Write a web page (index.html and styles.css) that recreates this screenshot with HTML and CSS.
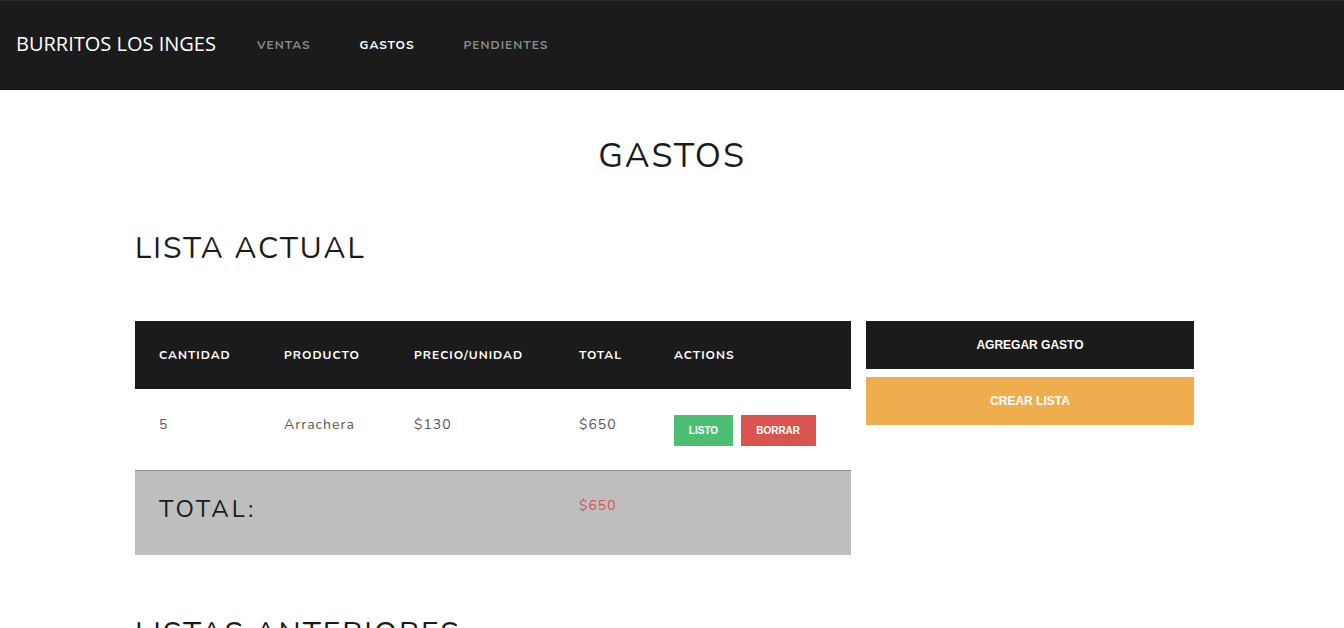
FILE: index.html
```html
<!DOCTYPE html>
<html lang="es">
<head>
<meta charset="utf-8">
<title>Gastos - Burritos Los Inges</title>
<link rel="stylesheet" href="styles.css">
</head>
<body>
<nav class="navbar">
  <a class="brand" href="#">BURRITOS LOS INGES</a>
  <ul class="nav-links">
    <li><a class="nav-link" href="#">VENTAS</a></li>
    <li><a class="nav-link active" href="#">GASTOS</a></li>
    <li><a class="nav-link" href="#">PENDIENTES</a></li>
  </ul>
</nav>
<main class="page">
  <h1 class="page-title">GASTOS</h1>
  <h2 class="section-title">LISTA ACTUAL</h2>
  <div class="current">
    <table class="expenses">
      <thead>
        <tr>
          <th class="c-qty">CANTIDAD</th>
          <th class="c-prod">PRODUCTO</th>
          <th class="c-price">PRECIO/UNIDAD</th>
          <th class="c-total">TOTAL</th>
          <th class="c-actions">ACTIONS</th>
        </tr>
      </thead>
      <tbody>
        <tr class="item-row">
          <td>5</td>
          <td>Arrachera</td>
          <td>$130</td>
          <td>$650</td>
          <td class="actions">
            <button class="btn btn-done">LISTO</button>
            <button class="btn btn-delete">BORRAR</button>
          </td>
        </tr>
      </tbody>
      <tfoot>
        <tr class="total-row">
          <td colspan="3" class="total-label">TOTAL:</td>
          <td class="total-value">$650</td>
          <td></td>
        </tr>
      </tfoot>
    </table>
    <div class="side">
      <button class="side-btn side-add">AGREGAR GASTO</button>
      <button class="side-btn side-create">CREAR LISTA</button>
    </div>
  </div>
  <h2 class="section-title previous">LISTAS ANTERIORES</h2>
</main>
</body>
</html>
```
FILE: styles.css
```css
* { box-sizing: border-box; }
html, body { margin: 0; padding: 0; }
body {
  font-family: "Nunito", "Lato", "Open Sans", sans-serif;
  color: #1b1b1b;
  background: #fff;
  overflow: hidden;
}
.navbar {
  height: 90px;
  background: #1b1b1b;
  border-top: 1px solid #2a2a2a;
  display: flex;
  align-items: center;
  padding: 0 16px 4px;
}
.brand {
  font-family: "Open Sans", sans-serif;
  font-size: 20px;
  font-weight: 500;
  color: #fff;
  text-decoration: none;
  margin-right: 41px;
  letter-spacing: 0;
}
.nav-links {
  list-style: none;
  display: flex;
  margin: 0;
  padding: 0;
  gap: 49px;
}
.nav-link {
  font-size: 12px;
  font-weight: 700;
  letter-spacing: 1px;
  color: #8a8a8a;
  text-decoration: none;
}
.nav-link.active { color: #fff; }

.page { padding: 0 135px; }
.page-title {
  margin: 46px 0 0;
  text-align: center;
  font-size: 34px;
  font-weight: 400;
  letter-spacing: 2px;
  line-height: 40px;
}
.section-title {
  margin: 53px 0 0;
  font-size: 30px;
  font-weight: 400;
  letter-spacing: 2px;
  line-height: 40px;
}
.current {
  display: flex;
  align-items: flex-start;
  gap: 15px;
  margin-top: 52px;
}
.expenses {
  width: 716px;
  border-collapse: collapse;
  flex: none;
}
.expenses th {
  background: #1b1b1b;
  color: #fff;
  font-size: 12px;
  font-weight: 700;
  letter-spacing: 1px;
  text-align: left;
  height: 68px;
  padding: 0 0 0 24px;
}
.c-qty { width: 125px; }
.c-prod { width: 130px; }
.c-price { width: 165px; }
.c-total { width: 95px; }
.item-row td {
  height: 81px;
  padding: 0 0 10px 24px;
  font-size: 14px;
  letter-spacing: 1px;
  color: #555;
  vertical-align: middle;
}
.item-row td.actions { padding-bottom: 0; padding-top: 2px; }
.btn {
  border: 0;
  color: #fff;
  font-family: "Liberation Sans", Arial, sans-serif;
  font-weight: 700;
  font-size: 10px;
  height: 31px;
  padding: 0;
  cursor: pointer;
  vertical-align: middle;
}
.btn-done { background: #4cbf73; width: 59px; }
.btn-delete { background: #d9534f; width: 75px; margin-left: 3px; }
.total-row td {
  background: #bebebe;
  border-top: 1px solid #888;
  height: 85px;
  padding: 0 0 0 24px;
}
.total-label {
  font-size: 24px;
  letter-spacing: 3px;
  color: #1b1b1b;
  padding-bottom: 8px !important;
}
.total-value {
  color: #d9534f;
  font-size: 14px;
  letter-spacing: 1px;
  padding-bottom: 15px !important;
}
.side {
  width: 328px;
  display: flex;
  flex-direction: column;
  gap: 8px;
}
.side-btn {
  height: 48px;
  border: 0;
  color: #fff;
  font-family: "Liberation Sans", Arial, sans-serif;
  font-weight: 700;
  font-size: 12px;
  cursor: pointer;
}
.side-add { background: #1b1b1b; }
.side-create { background: #f0ad4e; }
.previous { margin-top: 59px; }
```
